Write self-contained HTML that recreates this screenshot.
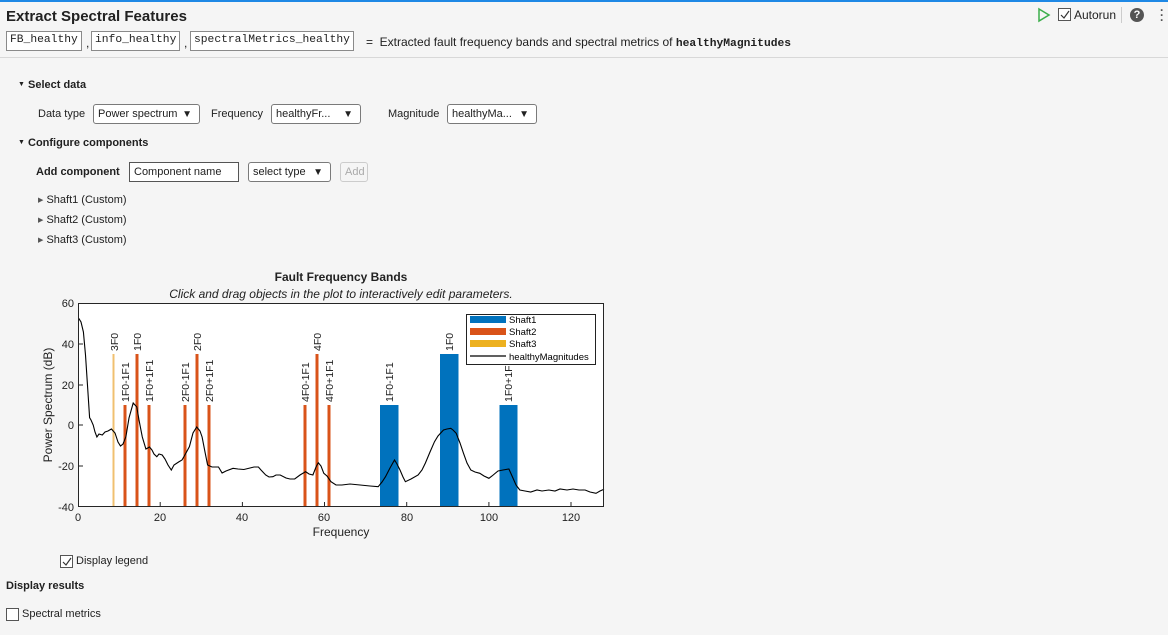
<!DOCTYPE html>
<html><head><meta charset="utf-8"><style>
*{box-sizing:border-box;margin:0;padding:0}
body{width:1168px;height:635px;background:#f5f5f5;font-family:"Liberation Sans",sans-serif;font-size:11px;color:#212121;position:relative;overflow:hidden}
.a{position:absolute;white-space:nowrap}
.mono{font-family:"Liberation Mono",monospace;font-size:11.3px}
.box{border:1px solid #8a8a8a;background:#fff;padding:2px 3px;height:20px}
.dd{border:1px solid #7a7a7a;border-radius:3px;background:#fff;height:20px;padding:3px 4px 0;font-size:11px}
.dd i{position:absolute;right:7px;top:4px;font-style:normal;font-size:10px}
.b{font-weight:bold}
.cb{border:1px solid #555;background:#fff;width:13px;height:13px}
</style></head><body>
<div class="a" style="left:0;top:0;width:1168px;height:2px;background:#1e88e5"></div>
<div class="a b" style="left:6px;top:8px;font-size:15px">Extract Spectral Features</div>
<div class="a" style="left:1037px;top:7px"><svg width="14" height="16"><path d="M2 2 L12 8 L2 14 Z" fill="none" stroke="#3cae4b" stroke-width="1.5"/></svg></div>
<div class="a cb" style="left:1058px;top:8px"><svg width="11" height="11"><path d="M2 6 L5 9 L10 2" fill="none" stroke="#333" stroke-width="1.2"/></svg></div>
<div class="a" style="left:1074px;top:8px;font-size:12px">Autorun</div>
<div class="a" style="left:1121px;top:7px;width:1px;height:16px;background:#ccc"></div>
<div class="a" style="left:1130px;top:8px;width:14px;height:14px;border-radius:50%;background:#555;color:#fff;font-size:11px;font-weight:bold;text-align:center;line-height:14px">?</div>
<div class="a" style="left:1160px;top:8px;font-size:12px;line-height:5px;color:#555;font-weight:bold">·<br>·<br>·</div>
<div class="a box mono" style="left:6px;top:31px">FB_healthy</div>
<div class="a" style="left:86px;top:36px;font-size:12px">,</div>
<div class="a box mono" style="left:91px;top:31px">info_healthy</div>
<div class="a" style="left:184px;top:36px;font-size:12px">,</div>
<div class="a box mono" style="left:190px;top:31px">spectralMetrics_healthy</div>
<div class="a" style="left:366px;top:35px;font-size:12px">= &nbsp;Extracted fault frequency bands and spectral metrics of <span class="mono b" style="font-weight:bold;font-size:11.3px">healthyMagnitudes</span></div>
<div class="a" style="left:0;top:57px;width:1168px;height:1px;background:#d8d8d8"></div>

<div class="a b" style="left:18px;top:79px"><span style="font-size:7px;position:relative;top:-2px">▼</span> Select data</div>
<div class="a" style="left:38px;top:108px">Data type</div>
<div class="a dd" style="left:93px;top:104px;width:107px">Power spectrum<i>▼</i></div>
<div class="a" style="left:211px;top:108px">Frequency</div>
<div class="a dd" style="left:271px;top:104px;width:90px">healthyFr...<i>▼</i></div>
<div class="a" style="left:388px;top:108px">Magnitude</div>
<div class="a dd" style="left:447px;top:104px;width:90px">healthyMa...<i>▼</i></div>
<div class="a b" style="left:18px;top:137px"><span style="font-size:7px;position:relative;top:-2px">▼</span> Configure components</div>
<div class="a b" style="left:36px;top:166px">Add component</div>
<div class="a" style="left:129px;top:162px;width:110px;height:20px;border:1px solid #555;background:#fff;padding:3px 4px">Component name</div>
<div class="a dd" style="left:248px;top:162px;width:83px">select type<i>▼</i></div>
<div class="a" style="left:340px;top:162px;width:28px;height:20px;border:1px solid #ccc;border-radius:3px;color:#aaa;padding:3px 4px;background:#f5f5f5">Add</div>
<div class="a" style="left:38px;top:194px"><span style="font-size:7px;color:#555;position:relative;top:-1px">▶</span> Shaft1 (Custom)</div>
<div class="a" style="left:38px;top:214px"><span style="font-size:7px;color:#555;position:relative;top:-1px">▶</span> Shaft2 (Custom)</div>
<div class="a" style="left:38px;top:234px"><span style="font-size:7px;color:#555;position:relative;top:-1px">▶</span> Shaft3 (Custom)</div>

<svg class="a" style="left:0;top:260px" width="620" height="285" viewBox="0 260 620 285" font-family="Liberation Sans, sans-serif">
<text x="341" y="281" font-size="12" font-weight="bold" text-anchor="middle" fill="#222">Fault Frequency Bands</text>
<text x="341" y="298" font-size="12" font-style="italic" text-anchor="middle" fill="#222">Click and drag objects in the plot to interactively edit parameters.</text>
<rect x="78" y="303" width="526" height="204" fill="#fff"/>
<g fill="#d95319">
<rect x="123.5" y="405" width="3" height="102"/><rect x="135.5" y="354" width="3" height="153"/><rect x="147.5" y="405" width="3" height="102"/>
<rect x="183.5" y="405" width="3" height="102"/><rect x="195.5" y="354" width="3" height="153"/><rect x="207.5" y="405" width="3" height="102"/>
<rect x="303.5" y="405" width="3" height="102"/><rect x="315.5" y="354" width="3" height="153"/><rect x="327.5" y="405" width="3" height="102"/>
</g>
<rect x="112.5" y="354" width="2" height="153" fill="#f0c070"/>
<g fill="#0072bd"><rect x="380" y="405" width="18.5" height="102"/><rect x="440" y="354" width="18.5" height="153"/><rect x="499.5" y="405" width="18" height="102"/></g>
<g font-size="10.5" fill="#222">
<text transform="translate(118,351) rotate(-90)">3F0</text>
<text transform="translate(141,351) rotate(-90)">1F0</text>
<text transform="translate(129,402) rotate(-90)">1F0-1F1</text>
<text transform="translate(153,402) rotate(-90)">1F0+1F1</text>
<text transform="translate(189,402) rotate(-90)">2F0-1F1</text>
<text transform="translate(201,351) rotate(-90)">2F0</text>
<text transform="translate(213,402) rotate(-90)">2F0+1F1</text>
<text transform="translate(309,402) rotate(-90)">4F0-1F1</text>
<text transform="translate(321,351) rotate(-90)">4F0</text>
<text transform="translate(333,402) rotate(-90)">4F0+1F1</text>
<text transform="translate(393,402) rotate(-90)">1F0-1F1</text>
<text transform="translate(453,351) rotate(-90)">1F0</text>
<text transform="translate(512,402) rotate(-90)">1F0+1F1</text>
</g>
<polyline fill="none" stroke="#000" stroke-width="1.1" points="78.7,318.3 81,322 83.4,332 85.5,355 87.8,390 89.6,417.7 91,420 93.2,425 95,432 96.9,437 99,434 102.3,435 105,432 108,431 111.4,429 115,433 118,442 120.5,446 123,444 125.9,436.7 129,418 133.2,403 136.8,407 139,420 142.3,437 145.9,449 149.5,447 152,450 154,454 156.8,456.7 159,454 162.2,455 165,459 168,465 171.3,470 174,465 178.6,462 182,460 185.8,453.3 189.4,446.7 193,433 196.7,427 200,431 202.1,437 205,452 207.6,465 212,467 218.5,467 222.1,473 226,471 233,468.3 238,469 243.9,469.5 250,468 254,467 258.4,467 261,470 265.7,475 269,477 272.9,476.7 276,475 280.2,475 286,478 290,479 294.7,479 300,475 305.6,471.7 309,474 312.9,475 316,467 318.3,462.7 321,466 323.8,473.3 327,476 331,481.7 336,485 341.9,485 350,484 360.1,485 370,486 378.2,486.7 382,482 385.5,476.7 390,468 394.5,460 397,464 400,470 403,477 405.4,481.7 411,479 418.1,475 422,470 425.4,463 430,452 434.5,441.7 438,436 443.5,430 447,429 450.8,428.3 453,430 456.2,433.3 460,443 463.5,453.3 467,463 470.8,470 475,472 479.8,473.3 484,476 488.9,478.3 492,476 498,471 503,470 508.9,469 512.5,477 516,485 519.8,490 525,491 530.7,492 537,490 542,491 548.8,490 555,491 560,489 567,490 573,489 579,490 585.1,490 590,492 596,493.3 600,491 604,489.3"/>
<rect x="466.5" y="314.5" width="129" height="50" fill="#fff" stroke="#222"/>
<rect x="470" y="316" width="36" height="7" fill="#0072bd"/><text x="509" y="323" font-size="9.5">Shaft1</text>
<rect x="470" y="328" width="36" height="7" fill="#d95319"/><text x="509" y="335" font-size="9.5">Shaft2</text>
<rect x="470" y="340" width="36" height="7" fill="#edb120"/><text x="509" y="347" font-size="9.5">Shaft3</text>
<line x1="470" y1="356" x2="506" y2="356" stroke="#000" stroke-width="1.2"/><text x="509" y="360" font-size="9.5">healthyMagnitudes</text>
<rect x="78.5" y="303.5" width="525" height="203" fill="none" stroke="#262626"/>
<g stroke="#262626">
<line x1="160.2" y1="507" x2="160.2" y2="502"/><line x1="242.4" y1="507" x2="242.4" y2="502"/><line x1="324.5" y1="507" x2="324.5" y2="502"/><line x1="406.7" y1="507" x2="406.7" y2="502"/><line x1="488.9" y1="507" x2="488.9" y2="502"/><line x1="571" y1="507" x2="571" y2="502"/>
<line x1="78" y1="344" x2="83" y2="344"/><line x1="78" y1="385" x2="83" y2="385"/><line x1="78" y1="425" x2="83" y2="425"/><line x1="78" y1="466" x2="83" y2="466"/>
</g>
<g font-size="11" fill="#222" text-anchor="middle">
<text x="78" y="521">0</text><text x="160" y="521">20</text><text x="242" y="521">40</text><text x="324" y="521">60</text><text x="407" y="521">80</text><text x="489" y="521">100</text><text x="571" y="521">120</text>
<text x="341" y="536" font-size="12">Frequency</text>
</g>
<g font-size="11" fill="#222" text-anchor="end">
<text x="74" y="307">60</text><text x="74" y="348">40</text><text x="74" y="389">20</text><text x="74" y="429">0</text><text x="74" y="470">-20</text><text x="74" y="511">-40</text>
</g>
<text transform="translate(52,405) rotate(-90)" font-size="12" text-anchor="middle" fill="#222">Power Spectrum (dB)</text>
</svg>

<div class="a cb" style="left:60px;top:555px"><svg width="11" height="11"><path d="M2 6 L5 9 L10 2" fill="none" stroke="#333" stroke-width="1.2"/></svg></div>
<div class="a" style="left:76px;top:555px">Display legend</div>
<div class="a b" style="left:6px;top:580px">Display results</div>
<div class="a cb" style="left:6px;top:608px"></div>
<div class="a" style="left:22px;top:608px">Spectral metrics</div>
</body></html>
